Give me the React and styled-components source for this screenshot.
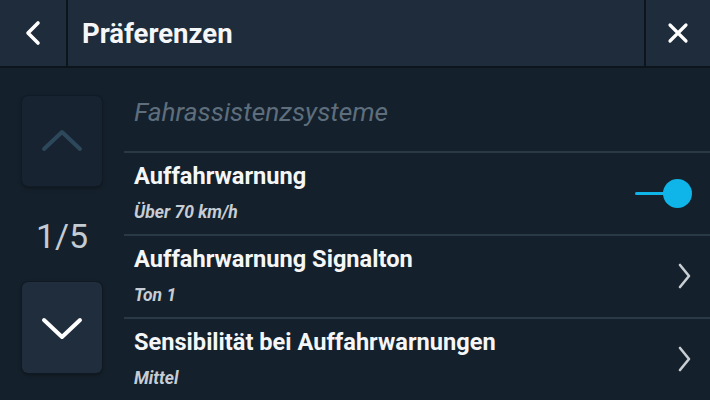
import React from "react";
import styled, { createGlobalStyle } from "styled-components";

const Global = createGlobalStyle`
  html, body { margin: 0; padding: 0; background: #14202b; }
  body { font-family: Roboto, "Liberation Sans", sans-serif; }
  #root { width: 710px; height: 400px; overflow: hidden; }
`;

const Screen = styled.div`
  width: 710px;
  height: 400px;
  display: flex;
  flex-direction: column;
  background: #14202b;
  overflow: hidden;
`;

const Header = styled.header`
  height: 66px;
  flex: none;
  display: flex;
  align-items: stretch;
  background: #1e2c3b;
  border-bottom: 2px solid #0c141c;
`;

const HeaderButton = styled.button`
  width: ${(p) => p.$w}px;
  flex: none;
  display: flex;
  align-items: center;
  justify-content: center;
  background: transparent;
  border: none;
  padding: 0;
  ${(p) => (p.$side === "left" ? "border-right" : "border-left")}: 2px solid #0c141c;
  color: #ffffff;
`;

const Title = styled.h1`
  flex: 1;
  margin: 0;
  padding: 1px 0 0 14px;
  display: flex;
  align-items: center;
  font-size: 27.5px;
  font-weight: 700;
  color: #f4f6f8;
`;

const Body = styled.div`
  flex: 1;
  display: flex;
  min-height: 0;
`;

const Pager = styled.div`
  width: 124px;
  flex: none;
  display: flex;
  flex-direction: column;
  align-items: center;
  padding-top: 28px;
  box-sizing: border-box;
`;

const PageButton = styled.button`
  width: 80px;
  height: ${(p) => p.$h}px;
  border-radius: 6px;
  border: none;
  padding: 0;
  display: flex;
  align-items: center;
  justify-content: center;
  background: ${(p) => (p.$disabled ? "#172331" : "#1f2d3c")};
  box-shadow: 0 0 0 1px ${(p) => (p.$disabled ? "#111b25" : "#101922")}, 0 2px 4px rgba(0,0,0,0.35);
`;

const PageCount = styled.div`
  height: 96px;
  display: flex;
  align-items: center;
  justify-content: center;
  font-size: 34px;
  font-weight: 400;
  color: #c3cbd3;
  padding-top: 4px;
  box-sizing: border-box;
`;

const List = styled.div`
  flex: 1;
  display: flex;
  flex-direction: column;
`;

const SectionTitle = styled.div`
  height: 84px;
  box-sizing: border-box;
  padding: 29px 0 0 10px;
  font-size: 26.3px;
  font-style: italic;
  font-weight: 400;
  line-height: 30px;
  color: #5e6e7d;
`;

const Row = styled.div`
  height: 83px;
  flex: none;
  box-sizing: border-box;
  border-top: 2px solid #2a3946;
  display: flex;
  align-items: flex-start;
  padding: 9px 0 0 10px;
`;

const RowText = styled.div`
  flex: 1;
  display: flex;
  flex-direction: column;
`;

const RowTitle = styled.div`
  font-size: 23.6px;
  font-weight: 700;
  line-height: 28px;
  color: #f4f6f8;
`;

const RowSub = styled.div`
  margin-top: 12px;
  font-size: 17.5px;
  font-style: italic;
  font-weight: 700;
  line-height: 20px;
  color: #c6cdd4;
`;

const RowAction = styled.div`
  width: 90px;
  align-self: stretch;
  display: flex;
  align-items: center;
  justify-content: flex-end;
  padding-right: ${(p) => p.$pr}px;
  padding-bottom: 10px;
  box-sizing: border-box;
`;

const Toggle = styled.div`
  display: flex;
  align-items: center;
`;

const Track = styled.div`
  width: 30px;
  height: 3px;
  background: #0fb4e8;
  border-radius: 2px;
  margin-right: -2px;
`;

const Knob = styled.div`
  width: 29px;
  height: 29px;
  border-radius: 50%;
  background: #0fb4e8;
`;

const rows = [
  { title: "Auffahrwarnung", sub: "Über 70 km/h", type: "toggle" },
  { title: "Auffahrwarnung Signalton", sub: "Ton 1", type: "link" },
  { title: "Sensibilität bei Auffahrwarnungen", sub: "Mittel", type: "link" },
];

export default function App() {
  return (
    <>
      <Global />
      <Screen>
        <Header>
          <HeaderButton $w={68} $side="left">
            <svg width="20" height="28" viewBox="0 0 20 28" fill="none">
              <path d="M15 4 L5 14 L15 24" stroke="#fff" strokeWidth="3.6" strokeLinecap="round" strokeLinejoin="round" />
            </svg>
          </HeaderButton>
          <Title>Präferenzen</Title>
          <HeaderButton $w={66} $side="right">
            <svg width="22" height="22" viewBox="0 0 22 22" fill="none">
              <path d="M3 3 L19 19 M19 3 L3 19" stroke="#fff" strokeWidth="3.2" strokeLinecap="round" />
            </svg>
          </HeaderButton>
        </Header>
        <Body>
          <Pager>
            <PageButton $h={90} $disabled>
              <svg width="44" height="26" viewBox="0 0 44 26" fill="none">
                <path d="M4 21 L22 4 L40 21" stroke="#2d475b" strokeWidth="4" strokeLinecap="round" strokeLinejoin="round" />
              </svg>
            </PageButton>
            <PageCount>1/5</PageCount>
            <PageButton $h={91}>
              <svg width="44" height="26" viewBox="0 0 44 26" fill="none">
                <path d="M4 5 L22 22 L40 5" stroke="#fff" strokeWidth="4" strokeLinecap="round" strokeLinejoin="round" />
              </svg>
            </PageButton>
          </Pager>
          <List>
            <SectionTitle>Fahrassistenzsysteme</SectionTitle>
            {rows.map((r) => (
              <Row key={r.title}>
                <RowText>
                  <RowTitle>{r.title}</RowTitle>
                  <RowSub>{r.sub}</RowSub>
                </RowText>
                {r.type === "toggle" ? (
                  <RowAction $pr={18}>
                    <Toggle>
                      <Track />
                      <Knob />
                    </Toggle>
                  </RowAction>
                ) : (
                  <RowAction $pr={18}>
                    <svg width="16" height="28" viewBox="0 0 16 28" fill="none">
                      <path d="M4 3 L13 14 L4 25" stroke="#c8ced4" strokeWidth="2.6" strokeLinecap="round" strokeLinejoin="round" />
                    </svg>
                  </RowAction>
                )}
              </Row>
            ))}
          </List>
        </Body>
      </Screen>
    </>
  );
}
